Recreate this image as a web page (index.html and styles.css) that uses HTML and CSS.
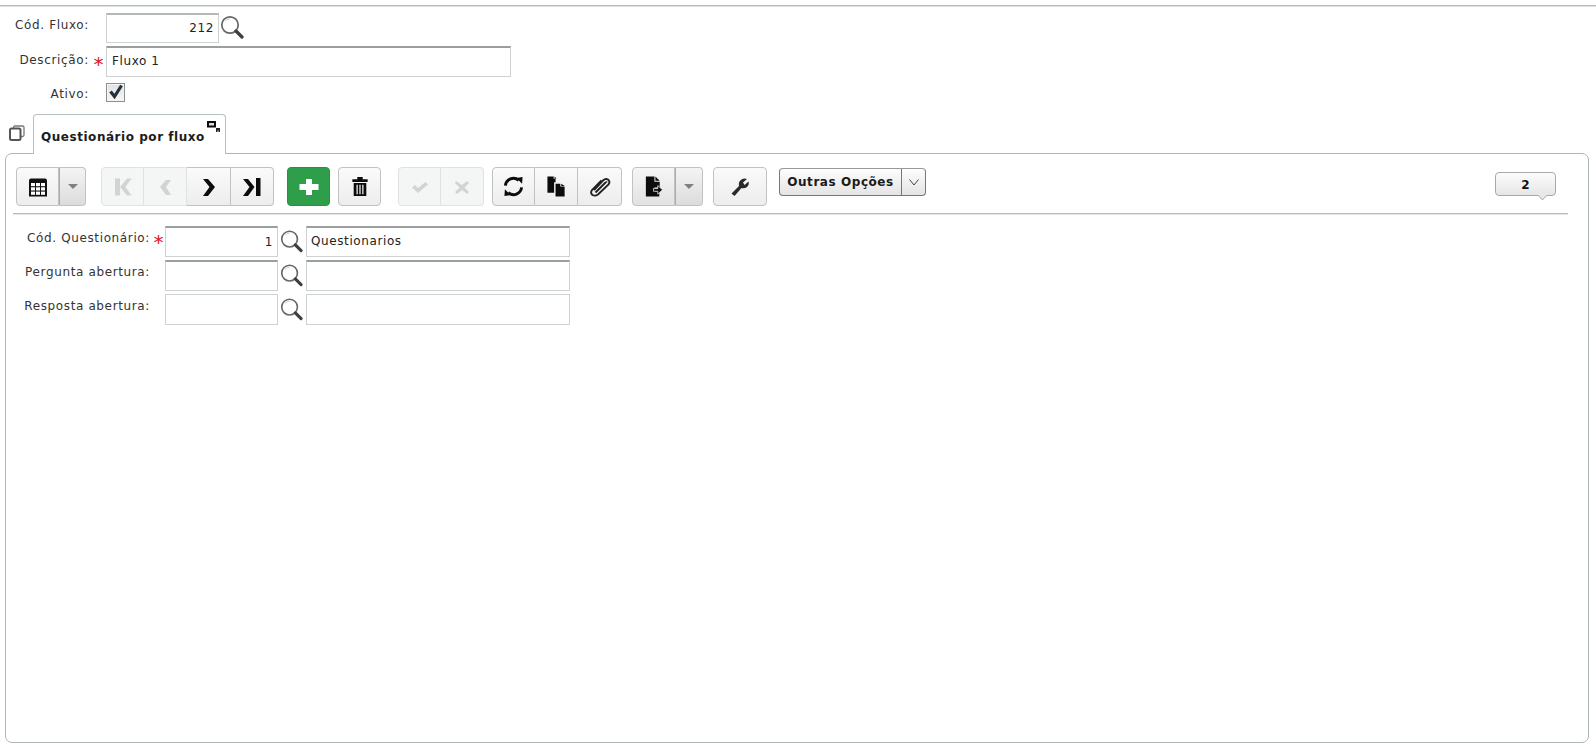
FILE: index.html
```html
<!DOCTYPE html>
<html lang="pt">
<head>
<meta charset="utf-8">
<title>Fluxo</title>
<link rel="stylesheet" href="styles.css">
</head>
<body>
<svg class="defs" width="0" height="0" aria-hidden="true">
  <symbol id="lens" viewBox="0 0 24 24">
    <circle cx="10" cy="10" r="8.200" fill="#fff" stroke="#666" stroke-width="1.700"/>
    <path d="M5.500 6 Q7 4 10 4" fill="none" stroke="#ccc" stroke-width="1"/>
    <path d="M16 16 L22 22" stroke="#3e3e3e" stroke-width="3.200" stroke-linecap="round"/>
  </symbol>
</svg>
<div class="top-rule"></div>
<form class="master">
  <div class="m-row r1">
    <label class="m-label">Cód. Fluxo:</label>
    <span class="req"></span>
    <div class="field w113 h30 num">212</div>
    <svg class="lens-lg"><use href="#lens"/></svg>
  </div>
  <div class="m-row r2">
    <label class="m-label">Descrição:</label>
    <span class="req">*</span>
    <div class="field w405 h31">Fluxo 1</div>
  </div>
  <div class="m-row r3">
    <label class="m-label">Ativo:</label>
    <span class="req"></span>
    <div class="check">
      <svg viewBox="0 0 19 19" width="19" height="19"><path d="M4.500 8.500 L8.500 13.500 L15.500 2.500" fill="none" stroke="#252f3b" stroke-width="3.200"/></svg>
    </div>
  </div>
</form>

<div class="tabs">
  <svg class="tab-copy" viewBox="0 0 16 16" width="16" height="16"><rect x="4.500" y="1" width="10.500" height="10.500" rx="1.500" fill="#fff" stroke="#777" stroke-width="1.300"/><rect x="1" y="3.500" width="10.500" height="11.500" rx="1.500" fill="#fff" stroke="#555" stroke-width="2"/></svg>
  <div class="tab">
    <span>Questionário por fluxo</span>
    <svg class="tab-pop" viewBox="0 0 13 12" width="13" height="12"><rect x="1" y="1" width="7" height="4.500" fill="#ddd" stroke="#0c0c0c" stroke-width="2"/><path d="M9 7 H13 V11 H11.500 V9.500 H10.500 V11 H9 Z" fill="#222"/></svg>
  </div>
</div>

<main class="panel">
  <div class="toolbar">
    <div class="group">
      <button type="button" class="btn split-main w43"><svg class="ic" viewBox="0 0 20 20"><path d="M1 3.500 Q1 1.500 3 1.500 H17 Q19 1.500 19 3.500 V19.500 H1 Z" fill="#111"/><g fill="#fff"><rect x="3" y="6" width="4" height="3.200"/><rect x="8" y="6" width="4" height="3.200"/><rect x="13" y="6" width="4" height="3.200"/><rect x="3" y="10.300" width="4" height="3.200"/><rect x="8" y="10.300" width="4" height="3.200"/><rect x="13" y="10.300" width="4" height="3.200"/><rect x="3" y="14.600" width="4" height="3.200"/><rect x="8" y="14.600" width="4" height="3.200"/><rect x="13" y="14.600" width="4" height="3.200"/></g></svg></button>
      <button type="button" class="btn split-caret"><span class="caret"></span></button>
    </div>
    <div class="group gap15">
      <button type="button" class="btn off first w43"><svg class="ic" viewBox="0 0 20 20"><path d="M2 1.500 H7 V18.500 H2 Z M7 10 L14 1.500 H18.500 L12.500 10 L18.500 18.500 H14 Z" fill="#d2d4d4"/></svg></button>
      <button type="button" class="btn off mid w43"><svg class="ic" viewBox="0 0 20 20"><path d="M11 3 H16 L11 10 L16 18 H11 L5 10 Z" fill="#d2d4d4"/></svg></button>
      <button type="button" class="btn mid w44"><svg class="ic" viewBox="0 0 20 20"><path d="M4 2 H9 L16 10 L9 19 H4 L10.500 10 Z" fill="#0c0c0c"/></svg></button>
      <button type="button" class="btn last w43"><svg class="ic" viewBox="0 0 20 20"><path d="M1 2 H6 L12.500 10 L6 19 H1 L7.500 10 Z M14 1 H18.500 V19 H14 Z" fill="#0c0c0c"/></svg></button>
    </div>
    <button type="button" class="btn add w43 gap13"><svg class="ic" viewBox="0 0 20 20"><path d="M7 2 H13 V7 H19.500 V13 H13 V18 H7 V13 H0.500 V7 H7 Z" fill="#fff"/></svg></button>
    <button type="button" class="btn w43 gap8"><svg class="ic ic-tall" viewBox="0 0 20 22"><path d="M1.500 3 H7 V0.500 H13 V3 H18.500 V6 H1.500 Z M3 7 H17 V21.500 H3 Z" fill="#0c0c0c"/><path d="M6.800 9 V19.500 M10 9 V19.500 M13.200 9 V19.500" stroke="#f2f2f2" stroke-width="1.400"/></svg></button>
    <div class="group gap17">
      <button type="button" class="btn off first w43"><svg class="ic" viewBox="0 0 20 20"><path d="M2 10.500 L5 8 L8 11 L15.500 5 L18 7.500 L8 16 Z" fill="#d2d4d4"/></svg></button>
      <button type="button" class="btn off last w43"><svg class="ic" viewBox="0 0 20 20"><path d="M4 4 L10 8 L15 4 L17 6 L12.500 10.500 L17 15 L15 17 L10 13 L5 17 L3 15 L7.500 10.500 L3 6 Z" fill="#d2d4d4"/></svg></button>
    </div>
    <div class="group gap8">
      <button type="button" class="btn first w43"><svg class="ic ic-22" viewBox="0 0 22 22"><path d="M2.500 10 A8.500 8.500 0 0 1 16.500 4.500 M19.500 12 A8.500 8.500 0 0 1 5.500 17.500" fill="none" stroke="#0c0c0c" stroke-width="3"/><path d="M14 2 L20.500 1 L20 8 Z M8 20 L1.500 21 L2 14 Z" fill="#0c0c0c"/></svg></button>
      <button type="button" class="btn mid w43"><svg class="ic ic-22" viewBox="0 0 20 22"><path d="M0.500 0.500 H7 V3 H9 V6.500 H7.500 V17.500 H0.500 Z M8 0.500 L10 2.500 H8 Z M9 8 H14 V11 H18.500 V21.500 H9 Z M15 8 L18.500 10.500 H15 Z" fill="#0c0c0c"/></svg></button>
      <button type="button" class="btn last w44"><svg class="ic ic-clip" viewBox="0 0 24 20"><g fill="none" stroke="#222" stroke-width="1.900"><path d="M6 13 L15 3.500 Q17.500 1 20 2.500 Q22.500 4.500 20.500 7.500 L10 17.500 Q7 19.500 4.500 18 Q2 16 4 13 L13.500 3.500"/><path d="M7.500 15.500 L17 6 Q18.500 4.500 19 5.500"/></g></svg></button>
    </div>
    <div class="group gap10">
      <button type="button" class="btn split-main w43 shade"><svg class="ic ic-22" viewBox="0 0 20 22"><path d="M2 0.500 H11 V6 H16.500 V12 H11 V16 H16 V21.500 H2 Z M12 0.500 L16.500 5 H12 Z" fill="#0c0c0c"/><path d="M10 13 H14.500 V10 L19.500 14.500 L14.500 19 V16 H10 Z" fill="#0c0c0c" stroke="#eee" stroke-width=".8"/></svg></button>
      <button type="button" class="btn split-caret wide"><span class="caret"></span></button>
    </div>
    <button type="button" class="btn w54 gap10"><svg class="ic" viewBox="0 0 20 20"><path d="M1.500 16.500 L9 9 Q8 4.500 11.500 2.500 Q14 1 17 2 L13 5.500 L14.500 8 L18.500 4.500 Q19.500 7.500 17 10 Q14.500 12 11.500 11 L4.500 19 Z" fill="#2a2a2a"/></svg></button>
    <div class="options">
      <span class="opt-text">Outras Opções</span>
      <span class="opt-arrow"><svg viewBox="0 0 10 7" width="10" height="7"><path d="M0.500 0.500 L5 6 L9.500 0.500" fill="none" stroke="#444" stroke-width="1"/></svg></span>
    </div>
    <div class="balloon">2</div>
  </div>
  <div class="tool-rule"></div>

  <div class="detail">
    <label class="d-label">Cód. Questionário:</label>
    <span class="req">*</span>
    <div class="field w113 h31 num tall">1</div>
    <svg class="lens-sm"><use href="#lens"/></svg>
    <div class="field w264 h31 named">Questionarios</div>

    <label class="d-label">Pergunta abertura:</label>
    <span class="req"></span>
    <div class="field w113 h31"></div>
    <svg class="lens-sm"><use href="#lens"/></svg>
    <div class="field w264 h31"></div>

    <label class="d-label">Resposta abertura:</label>
    <span class="req"></span>
    <div class="field w113 h31 lite"></div>
    <svg class="lens-sm"><use href="#lens"/></svg>
    <div class="field w264 h31 lite"></div>
  </div>
</main>
</body>
</html>
```
FILE: styles.css
```css
* { box-sizing: border-box; }
html, body { margin: 0; padding: 0; height: 747px; overflow: hidden; background: #fff; }
body {
  font-family: "DejaVu Sans", Verdana, sans-serif;
  font-size: 12px;
  color: #222;
}
.defs { display: block; height: 0; }
.top-rule { height: 1px; margin-top: 5px; background: #b4bcbc; box-shadow: 0 1px 0 #dde0e0; }

.master { padding-top: 7px; }
.m-row { display: flex; align-items: flex-start; }
.r2 { margin-top: 3px; }
.r3 { margin-top: 6px; }
.m-label { width: 89px; text-align: right; letter-spacing: .65px; color: #333; flex: none; white-space: nowrap; }
.r1 .m-label { padding-top: 5px; }
.r2 .m-label { padding-top: 7px; }
.r3 .m-label { padding-top: 4px; }
.req { width: 17px; height: 20px; color: #d8141c; font-size: 20px; line-height: 36px; text-align: center; padding-left: 2px; flex: none; }

.field {
  border: 1px solid #cfd2d2;
  border-top: 2px solid #9a9e9e;
  background: #fff;
  padding: 5px 4px 0 5px;
  color: #222;
  letter-spacing: .6px;
  line-height: 15px;
  flex: none;
}
.num { text-align: right; }
.w113 { width: 113px; }
.w405 { width: 405px; }
.w264 { width: 264px; }
.h30 { height: 30px; }
.h31 { height: 31px; }
.lite { border-top: 1px solid #cfd2d2; }
.tall { padding-top: 7px; }
.named { padding-top: 6px; padding-left: 4px; }
.r1 .field { border-top-color: #b4b8b8; padding-top: 6px; }
.r2 .field { padding-top: 6px; }
.lens-lg { width: 24px; height: 24px; margin: 2px 0 0 1px; }
.check {
  width: 19px; height: 19px;
  background: linear-gradient(#dfe1e3, #f7f7f7);
  border: 1px solid #8c9090;
  box-shadow: inset 0 0 0 1px #f4f4f4;
}
.check svg { display: block; margin: -1px; }

.tabs { display: flex; align-items: flex-end; height: 40px; margin-top: 11px; margin-bottom: -1px; padding-left: 9px; position: relative; z-index: 1; }
.tab-copy { margin-bottom: 13px; margin-right: 8px; flex: none; }
.tab {
  position: relative;
  width: 193px; height: 40px;
  background: #fff;
  border: 1px solid #b8c0c0;
  border-bottom: 0;
  border-radius: 4px 4px 0 0;
  font-weight: 700;
  color: #1c1c1c;
  font-size: 12px;
  padding: 15px 0 0 7px;
  letter-spacing: .54px;
  white-space: nowrap;
}
.tab-pop { position: absolute; top: 6px; right: 5px; }

.panel {
  margin: 0 7px 0 5px;
  height: 590px;
  border: 1px solid #adb5b5;
  border-radius: 7px;
  background: #fff;
}
.toolbar { display: flex; align-items: flex-start; padding: 13px 0 0 10px; position: relative; height: 59px; }
.group { display: flex; flex: none; }
.btn {
  display: flex; align-items: center; justify-content: center;
  height: 39px; padding: 0; flex: none;
  background: linear-gradient(#fafafa, #ededed);
  border: 1px solid #bfc3c3;
  border-radius: 4px;
}
.w43 { width: 43px; }
.w44 { width: 44px; }
.w54 { width: 54px; }
.gap8 { margin-left: 8px; }
.gap10 { margin-left: 10px; }
.gap13 { margin-left: 13px; }
.gap15 { margin-left: 15px; }
.gap17 { margin-left: 17px; }
.ic { width: 20px; height: 20px; display: block; }
.ic-22 { width: 21px; height: 21px; }
.ic-tall { width: 18px; height: 21px; }
.ic-clip { width: 24px; height: 20px; }
.first { border-radius: 4px 0 0 4px; }
.mid { border-radius: 0; border-left: 0; }
.last { border-radius: 0 4px 4px 0; border-left: 0; }
.split-main { border-radius: 4px 0 0 4px; }
.split-caret {
  width: 27px; border-radius: 0 4px 4px 0; border-left: 1px solid #a8acac;
  background: linear-gradient(#f4f4f4, #dcdcdc);
}
.wide { width: 28px; }
.shade { background: linear-gradient(#f6f6f6, #e2e2e2); }
.caret { width: 0; height: 0; border-left: 5px solid transparent; border-right: 5px solid transparent; border-top: 5px solid #808080; }
.off { background: #f4f5f5; border-color: #e0e2e2; }
.add { background: #2f9e4a; border-color: #2a8f42; }

.options {
  display: flex; height: 28px; margin: 1px 0 0 12px; flex: none;
  border: 1px solid #777;
  border-top-color: #999;
  border-radius: 4px;
  background: linear-gradient(#fdfdfd, #e4e4e4);
  font-weight: 700;
  letter-spacing: .56px;
  color: #1a1a1a;
}
.opt-text { width: 122px; line-height: 26px; text-align: center; border-right: 1px solid #777; white-space: nowrap; }
.opt-arrow { width: 23px; display: flex; align-items: center; justify-content: center; }

.balloon {
  position: absolute; left: 1489px; top: 18px;
  width: 61px; height: 24px;
  border: 1px solid #a6aaaa;
  border-radius: 4px;
  background: linear-gradient(#fcfcfc, #e6e6e6);
  text-align: center; font-weight: 700; line-height: 24px; color: #111;
}
.balloon::after {
  content: ""; position: absolute; left: 42px; bottom: -5px;
  width: 8px; height: 8px; background: #e8e8e8;
  border-right: 1px solid #a6aaaa; border-bottom: 1px solid #a6aaaa;
  transform: rotate(45deg) scale(.75);
}
.tool-rule { height: 1px; margin: 0 20px 0 7px; background: #b4bcbc; box-shadow: 0 1px 0 #e6e8e8; }

.detail {
  display: grid;
  grid-template-columns: 140px 19px 113px 28px 264px;
  grid-auto-rows: 31px;
  row-gap: 3px;
  padding-top: 12px;
  justify-content: start;
}
.d-label { text-align: right; letter-spacing: .63px; padding-top: 5px; margin-right: -4px; color: #333; white-space: nowrap; }
.detail .req { width: 19px; padding-left: 6px; line-height: 32px; }
.lens-sm { width: 23px; height: 24px; margin: 3px 0 0 2px; }
```
